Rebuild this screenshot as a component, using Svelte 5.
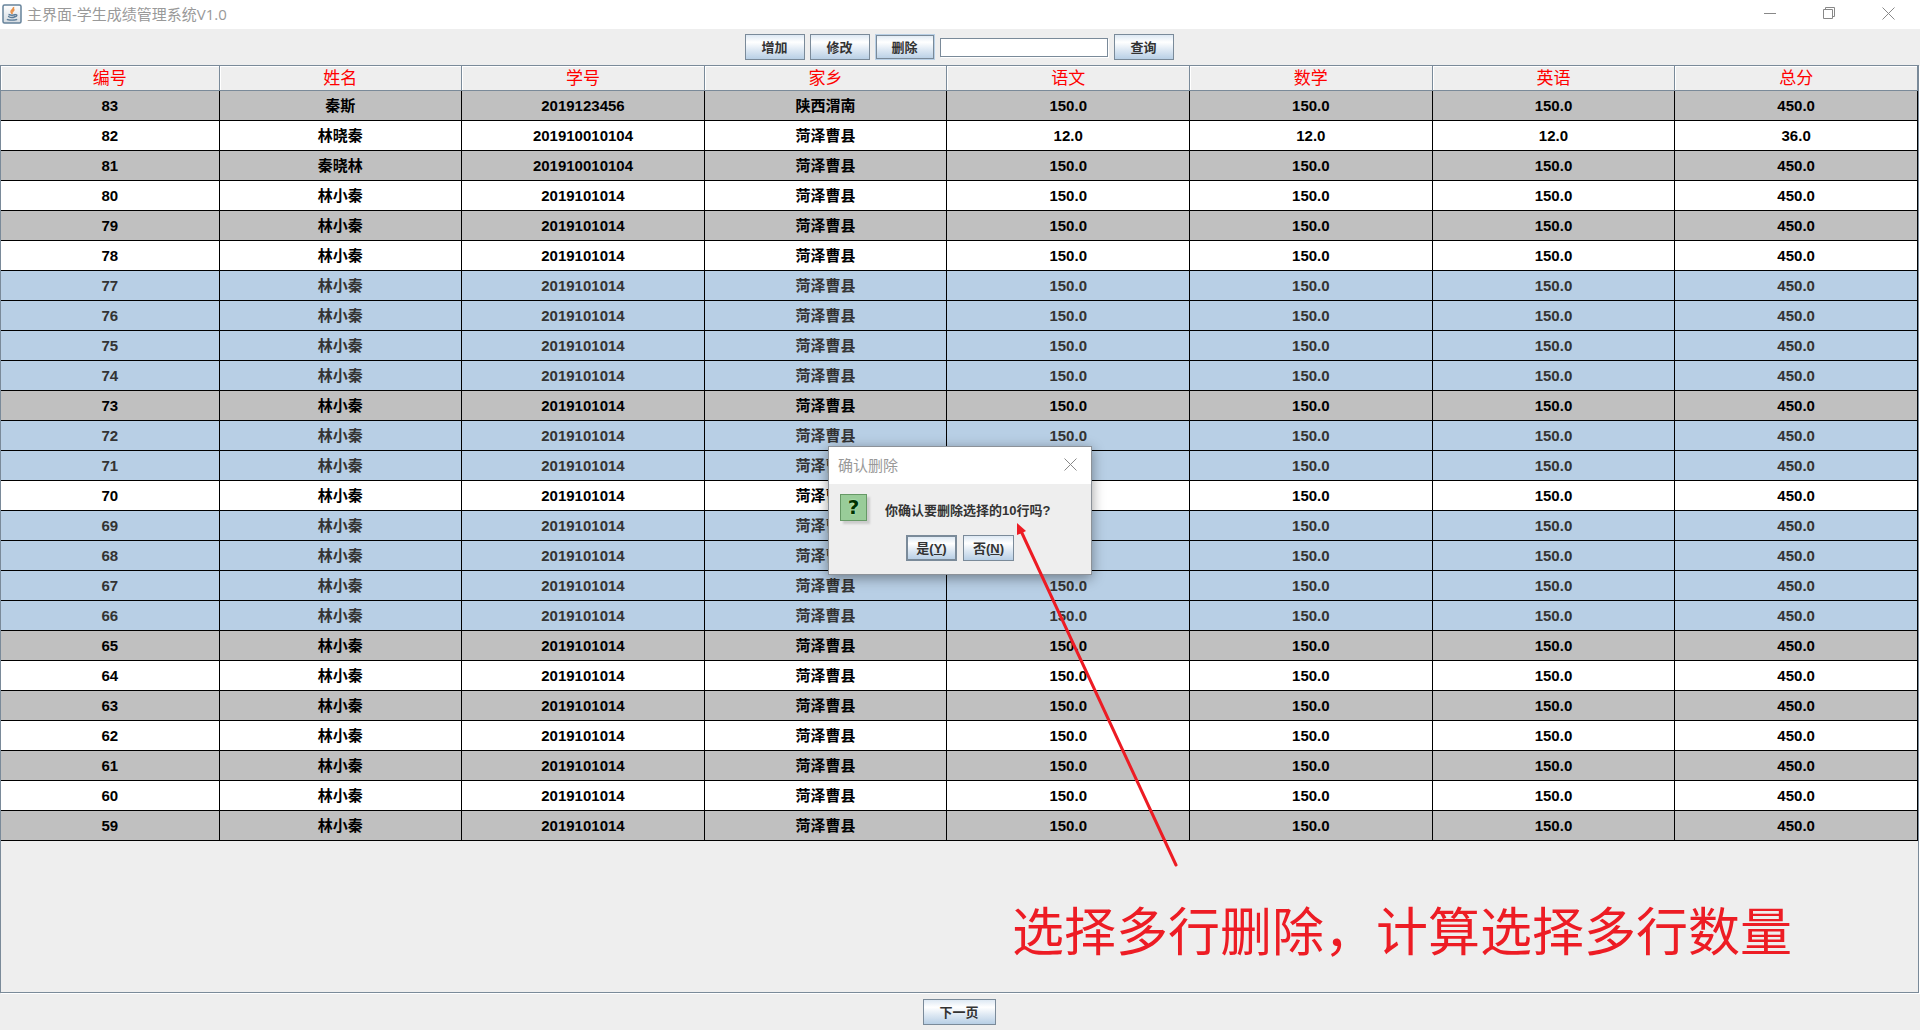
<script lang="ts">
	interface Student {
		id: number;
		name: string;
		no: string;
		home: string;
		chinese: number;
		math: number;
		english: number;
	}

	const columns = ['编号', '姓名', '学号', '家乡', '语文', '数学', '英语', '总分'];

	const latest: Student[] = [
		{ id: 83, name: '秦斯', no: '2019123456', home: '陕西渭南', chinese: 150, math: 150, english: 150 },
		{ id: 82, name: '林晓秦', no: '201910010104', home: '菏泽曹县', chinese: 12, math: 12, english: 12 },
		{ id: 81, name: '秦晓林', no: '201910010104', home: '菏泽曹县', chinese: 150, math: 150, english: 150 }
	];

	const older: Student[] = Array.from({ length: 22 }, (_, i) => ({
		id: 80 - i,
		name: '林小秦',
		no: '2019101014',
		home: '菏泽曹县',
		chinese: 150,
		math: 150,
		english: 150
	}));

	const students = [...latest, ...older];

	let selected = $state([77, 76, 75, 74, 72, 71, 69, 68, 67, 66]);
	let keyword = $state('');
	let confirming = $state(true);

	function toggle(id: number) {
		selected = selected.includes(id) ? selected.filter((s) => s !== id) : [...selected, id];
	}
</script>

<div class="window">
	<header class="titlebar">
		<svg class="java" viewBox="0 0 20 20" aria-hidden="true">
			<defs>
				<linearGradient id="tile" x1="0" y1="0" x2="0" y2="1">
					<stop offset="0" stop-color="#fff" />
					<stop offset="1" stop-color="#d3dae0" />
				</linearGradient>
			</defs>
			<rect x="1" y="1" width="18" height="18" rx="1.5" fill="url(#tile)" stroke="#66829a" stroke-width="1.5" />
			<path d="M11.5 3c1 2-3.2 3-2.4 5 .3.8 1 1.2 1 2M12.5 5.5c-1.500.8-2.200 1.700-1.300 2.800" fill="none" stroke="#e8914a" stroke-width="1.6" />
			<path d="M6.5 10.500c2 .8 5 .8 7 0M6.500 12c.3 2 6.200 2 6.700 0M13.400 10.800c2-.4 2 1.800-.3 2M5 15.200c1 1.200 9 1.200 10 0" fill="none" stroke="#5c7c98" stroke-width="1.4" />
		</svg>
		<h1>主界面-学生成绩管理系统V1.0</h1>
		<div class="controls">
			<button aria-label="最小化">
				<svg viewBox="0 0 13 13"><path d="M0 6.500h12" /></svg>
			</button>
			<button aria-label="还原">
				<svg viewBox="0 0 13 13"><path d="M.5 2.500h9v9h-9zM2.500 2.500v-2h9v9h-2" /></svg>
			</button>
			<button aria-label="关闭">
				<svg viewBox="0 0 13 13"><path d="M.5.500l12 12M12.500.500l-12 12" /></svg>
			</button>
		</div>
	</header>

	<form class="toolbar" onsubmit={(e) => e.preventDefault()}>
		<button type="button" class="btn">增加</button>
		<button type="button" class="btn">修改</button>
		<button type="button" class="btn focused" onclick={() => (confirming = true)}>删除</button>
		<input type="text" aria-label="查询内容" bind:value={keyword} />
		<button type="submit" class="btn query">查询</button>
	</form>

	<main class="pane">
		<table>
			<colgroup>
				<col class="first" />
				<col span="7" />
			</colgroup>
			<thead>
				<tr>
					{#each columns as column}
						<th>{column}</th>
					{/each}
				</tr>
			</thead>
			<tbody>
				{#each students as s (s.id)}
					<tr class:selected={selected.includes(s.id)} onclick={() => toggle(s.id)}>
						<td>{s.id}</td>
						<td>{s.name}</td>
						<td>{s.no}</td>
						<td>{s.home}</td>
						<td>{s.chinese.toFixed(1)}</td>
						<td>{s.math.toFixed(1)}</td>
						<td>{s.english.toFixed(1)}</td>
						<td>{(s.chinese + s.math + s.english).toFixed(1)}</td>
					</tr>
				{/each}
			</tbody>
		</table>
	</main>

	<footer>
		<button class="btn next">下一页</button>
	</footer>

	{#if confirming}
		<div class="dialog" role="dialog" aria-labelledby="dialog-title">
			<div class="dialog-title">
				<h2 id="dialog-title">确认删除</h2>
				<button aria-label="关闭" onclick={() => (confirming = false)}>
					<svg viewBox="0 0 13 13"><path d="M.5.500l12 12M12.500.500l-12 12" /></svg>
				</button>
			</div>
			<div class="dialog-body">
				<div class="message">
					<span class="question" aria-hidden="true">?</span>
					<p>你确认要删除选择的{selected.length}行吗?</p>
				</div>
				<div class="answers">
					<button class="btn default" onclick={() => (confirming = false)}>是(<u>Y</u>)</button>
					<button class="btn" onclick={() => (confirming = false)}>否(<u>N</u>)</button>
				</div>
			</div>
		</div>
	{/if}

	<svg class="arrow" viewBox="0 0 164 346" aria-hidden="true">
		<path d="M160 342L5 8" />
		<polygon points="1,0 10,8 6,10 1,12" />
	</svg>
	<p class="note">选择多行删除，计算选择多行数量</p>
</div>

<style>
	:global(body) {
		background: #eee;
	}

	.window {
		position: relative;
		display: flex;
		flex-direction: column;
		min-height: 100vh;
		overflow: hidden;
		background: #eee;
		color: #333;
		font-family: 'Liberation Sans', 'Noto Sans CJK SC', sans-serif;
	}

	button {
		font-family: inherit;
	}

	.titlebar {
		box-sizing: border-box;
		display: flex;
		align-items: center;
		gap: 5px;
		height: 29px;
		padding: 0 2px 2px;
		background: #fff;
	}

	.java {
		width: 20px;
		height: 20px;
	}

	h1,
	h2 {
		flex: 1;
		margin: 0;
		font: 400 15px/20px 'Open Sans', 'Noto Sans CJK SC', sans-serif;
		color: #999;
	}

	.controls {
		display: flex;
	}

	.controls button,
	.dialog-title button {
		display: flex;
		align-items: center;
		justify-content: center;
		padding: 0;
		border: 0;
		background: none;
	}

	.controls button {
		width: 59px;
		height: 27px;
	}

	.controls svg,
	.dialog-title svg {
		width: 13px;
		height: 13px;
		fill: none;
		stroke: #888;
	}

	.toolbar {
		display: flex;
		align-items: center;
		justify-content: center;
		gap: 5px;
		height: 36px;
		padding-right: 2px;
	}

	.btn {
		box-sizing: border-box;
		min-width: 60px;
		height: 26px;
		padding: 1px 0 0;
		border: 1px solid #7a8a99;
		background: linear-gradient(#dde8f3 0%, #fff 30%, #dde8f3 62%, #b8cfe5 100%);
		font-size: 13px;
		line-height: 23px;
		font-weight: 700;
		color: #333;
	}

	.btn.focused {
		border-color: #b8cfe5;
		box-shadow: inset 0 0 0 1px #7a8a99;
	}

	.toolbar input {
		box-sizing: border-box;
		width: 168px;
		height: 19px;
		padding: 0 2px;
		border: 1px solid #7a8a99;
		background: #fff;
		box-shadow: 1px 1px 0 #fff;
		font-size: 13px;
	}

	.btn.query {
		margin-left: 1px;
	}

	.pane {
		flex: 1;
		margin-right: 1px;
		border: 1px solid #7a8a99;
		box-shadow: 1px 1px 0 #fff;
	}

	table {
		width: 100%;
		table-layout: fixed;
		border-collapse: separate;
		border-spacing: 0;
		text-align: center;
	}

	.first {
		width: 11.4%;
	}

	th {
		height: 22px;
		padding: 2px 0 0;
		border-right: 1px solid #7a8a99;
		border-bottom: 1px solid #7a8a99;
		box-shadow: inset 1px 1px 0 #fff;
		font-size: 17px;
		line-height: 22px;
		font-weight: 400;
		color: #f00;
	}

	td {
		height: 29px;
		padding: 0;
		border-right: 1px solid #000;
		border-bottom: 1px solid #000;
		background: #fff;
		font-size: 15px;
		line-height: 29px;
		font-weight: 700;
		color: #000;
	}

	tbody tr:nth-child(odd) td {
		background: #c0c0c0;
	}

	tbody tr.selected td {
		background: #b8cfe5;
		color: #333;
	}

	footer {
		display: flex;
		align-items: center;
		justify-content: center;
		height: 37px;
		padding-right: 2px;
	}

	.btn.next {
		width: 73px;
	}

	.dialog {
		position: absolute;
		top: 446px;
		left: 50%;
		box-sizing: border-box;
		width: 264px;
		margin-left: -132px;
		border: 1px solid #8c9299;
		background: #eee;
		box-shadow: 0 3px 12px rgba(0, 0, 0, 0.4);
	}

	.dialog-title {
		box-sizing: border-box;
		display: flex;
		align-items: center;
		height: 37px;
		padding: 0 14px 2px 9px;
		background: #fff;
	}

	.dialog-body {
		padding: 10px 11px 13px;
	}

	.message {
		display: flex;
		align-items: center;
		gap: 18px;
		height: 32px;
	}

	.question {
		box-sizing: border-box;
		width: 27px;
		height: 27px;
		margin-bottom: 5px;
		border: 1px solid #669966;
		background: #99cc99;
		box-shadow: 3px 3px 2px #ccc;
		font: 700 20px/25px 'DejaVu Sans', sans-serif;
		text-align: center;
		color: #003300;
		text-shadow: 0 0 2px #ccffcc;
	}

	.message p {
		margin: 2px 0 0;
		font-size: 13px;
		line-height: 20px;
		font-weight: 700;
	}

	.answers {
		display: flex;
		justify-content: center;
		gap: 6px;
		margin-top: 9px;
	}

	.answers .btn {
		min-width: 51px;
	}

	.btn.default {
		border-width: 2px;
		line-height: 21px;
	}

	.arrow {
		position: absolute;
		top: 523px;
		left: 50%;
		width: 164px;
		height: 346px;
		margin-left: 56px;
		fill: #ed1c24;
		pointer-events: none;
	}

	.arrow path {
		stroke: #ed1c24;
		stroke-width: 3;
		stroke-linecap: round;
	}

	.note {
		position: absolute;
		top: 899px;
		left: 50%;
		margin: 0 0 0 52px;
		font: 400 52px/60px 'Noto Sans CJK SC', sans-serif;
		white-space: nowrap;
		color: #ed1c24;
	}
</style>
